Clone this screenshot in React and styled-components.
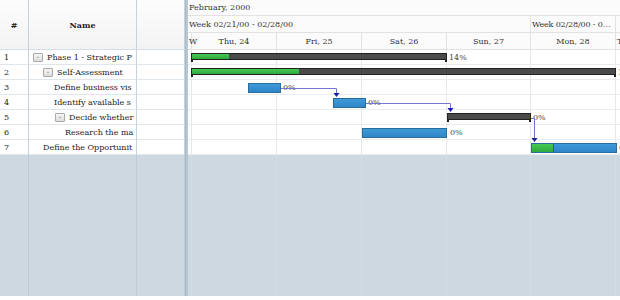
import React from "react";
import styled, { createGlobalStyle } from "styled-components";

const Global = createGlobalStyle`
  html, body { margin: 0; padding: 0; background: #fff; }
  body { font-family: "DejaVu Serif", serif; font-size: 8px; color: #222; }
  * { box-sizing: border-box; }
`;

const ROW_H = 15;
const HEADER_H = 50;
const TOTAL_H = 296;

const Wrap = styled.div`
  display: flex;
  width: 620px;
  height: ${TOTAL_H}px;
  overflow: hidden;
  background: #cdd8e1;
`;

const Left = styled.div`
  display: grid;
  grid-template-columns: 29px 108px 48px;
  grid-template-rows: ${HEADER_H}px repeat(7, ${ROW_H}px) 1fr;
  width: 185px;
  flex: none;
`;

const HeadCell = styled.div`
  display: flex;
  align-items: center;
  justify-content: center;
  font-weight: bold;
  background: linear-gradient(#fdfdfd, #f3f3f3);
  border-right: 1px solid #c3d3df;
  border-bottom: 1px solid #d4dde5;
  color: #222;
`;

const Cell = styled.div`
  display: flex;
  align-items: center;
  background: #fff;
  border-right: 1px solid #c3d3df;
  border-bottom: 1px solid #dfe6ec;
  overflow: hidden;
  white-space: nowrap;
  padding-left: ${(p) => p.$pad || 0}px;
  color: #222;
`;

const NameCell = styled(Cell)`
  padding-right: 4px;
`;

const Filler = styled.div`
  background: #cdd8e1;
  border-right: 1px solid #bccbd7;
`;

const Toggle = styled.span`
  display: inline-flex;
  align-items: center;
  justify-content: center;
  width: 10px;
  height: 9px;
  margin-right: 4px;
  border: 1px solid #a9a9a9;
  border-radius: 1px;
  background: linear-gradient(#f6f6f6, #dcdcdc);
  font-size: 7px;
  line-height: 1;
  color: #555;
  flex: none;
`;

const Splitter = styled.div`
  width: 3px;
  flex: none;
  background: #b9c7d2;
  border-left: 1px solid #a9b9c6;
`;

const Gantt = styled.div`
  position: relative;
  flex: 1;
  display: flex;
  flex-direction: column;
  overflow: hidden;
`;

const HeadRow = styled.div`
  display: flex;
  height: ${(p) => p.$h}px;
  flex: none;
  background: #fbfbfb;
  border-bottom: 1px solid #e2e2e2;
`;

const HeadCellG = styled.div`
  flex: none;
  width: ${(p) => p.$w}px;
  display: flex;
  align-items: center;
  justify-content: ${(p) => (p.$center ? "center" : "flex-start")};
  padding-left: ${(p) => (p.$center ? 0 : 1)}px;
  border-right: ${(p) => (p.$noBorder ? "none" : "1px solid #e2e2e2")};
  white-space: nowrap;
  overflow: ${(p) => (p.$clip ? "hidden" : "visible")};
  color: #333;
`;

const HeadLabel = styled.span`
  display: block;
  min-width: 0;
  overflow: hidden;
  text-overflow: ellipsis;
  white-space: nowrap;
  letter-spacing: -0.15px;
`;

const Body = styled.div`
  position: relative;
  flex: 1;
  display: flex;
  flex-direction: column;
`;

const GRow = styled.div`
  position: relative;
  display: flex;
  height: ${ROW_H}px;
  flex: none;
  background: #fff;
  border-bottom: 1px solid #e9edf0;
`;

const GFill = styled.div`
  flex: 1;
  display: flex;
  background: #cdd8e1;
`;

const DayCell = styled.div`
  flex: none;
  width: ${(p) => p.$w}px;
  border-right: 1px solid ${(p) => (p.$grey ? "#d3dce3" : "#e6e9ec")};
`;

const TaskBar = styled.div`
  position: absolute;
  top: 3px;
  height: 10px;
  border: 1px solid #2a6c9c;
  background: linear-gradient(#3d9ad8, #2f86c6);
  overflow: hidden;
`;

const Progress = styled.div`
  height: 100%;
  background: linear-gradient(#45c955, #2fa93d);
  border-right: 1px solid #1f7a2a;
`;

const SummaryBar = styled.div`
  position: absolute;
  top: 3px;
  height: 7px;
  border: 1px solid #222;
  background: #4a4a4a;
  &::before, &::after {
    content: "";
    position: absolute;
    bottom: -3px;
    width: 2px;
    height: 3px;
    background: #222;
  }
  &::before { left: -1px; }
  &::after { right: -1px; }
`;

const SummaryProgress = styled.div`
  height: 100%;
  background: linear-gradient(#45c955, #2fa93d);
`;

const Pct = styled.span`
  position: absolute;
  top: 0;
  height: ${ROW_H}px;
  display: flex;
  align-items: center;
  color: #444;
  white-space: nowrap;
`;

const Arrows = styled.svg`
  position: absolute;
  left: 0;
  top: 0;
  pointer-events: none;
`;

const days = [
  { w: 4, label: "W" },
  { w: 85, label: "Thu, 24", c: true },
  { w: 85, label: "Fri, 25", c: true },
  { w: 85, label: "Sat, 26", c: true },
  { w: 84, label: "Sun, 27", c: true },
  { w: 85, label: "Mon, 28", c: true },
  { w: 40, label: "T" },
];

const rows = [
  { n: 1, name: "Phase 1 - Strategic P", pad: 4, toggle: true, bar: { type: "s", x: 3, w: 256, p: 37 }, pct: { x: 261, t: "14%" } },
  { n: 2, name: "Self-Assessment", pad: 14, toggle: true, bar: { type: "s", x: 3, w: 425, p: 107 }, pct: { x: 430, t: "14%" } },
  { n: 3, name: "Define business vis", pad: 25, bar: { type: "t", x: 60, w: 33, p: 0 }, pct: { x: 95, t: "0%" } },
  { n: 4, name: "Identify available s", pad: 25, bar: { type: "t", x: 145, w: 33, p: 0 }, pct: { x: 180, t: "0%" } },
  { n: 5, name: "Decide whether", pad: 26, toggle: true, bar: { type: "s", x: 259, w: 84, p: 0 }, pct: { x: 345, t: "0%" } },
  { n: 6, name: "Research the ma", pad: 36, bar: { type: "t", x: 174, w: 85, p: 0 }, pct: { x: 262, t: "0%" } },
  { n: 7, name: "Define the Opportunit", pad: 14, bar: { type: "t", x: 343, w: 86, p: 22 }, pct: { x: 431, t: "0%" } },
];

function Bar({ bar }) {
  if (bar.type === "s") {
    return (
      <SummaryBar style={{ left: bar.x, width: bar.w }}>
        <SummaryProgress style={{ width: bar.p }} />
      </SummaryBar>
    );
  }
  return (
    <TaskBar style={{ left: bar.x, width: bar.w }}>
      {bar.p > 0 && <Progress style={{ width: bar.p }} />}
    </TaskBar>
  );
}

function Arrow({ d, tipX, tipY }) {
  return (
    <g>
      <path d={d} fill="none" stroke="#7474d2" strokeWidth="1" />
      <path d={`M${tipX - 3} ${tipY - 4} L${tipX + 3} ${tipY - 4} L${tipX} ${tipY} Z`} fill="#1c1ca0" />
    </g>
  );
}

export default function App() {
  return (
    <>
      <Global />
      <Wrap>
        <Left>
          <HeadCell>#</HeadCell>
          <HeadCell>Name</HeadCell>
          <HeadCell />
          {rows.map((r) => (
            <React.Fragment key={r.n}>
              <Cell $pad={4}>{r.n}</Cell>
              <NameCell $pad={r.pad}>
                {r.toggle && <Toggle>-</Toggle>}
                {r.name}
              </NameCell>
              <Cell />
            </React.Fragment>
          ))}
          <Filler />
          <Filler />
          <Filler />
        </Left>
        <Splitter />
        <Gantt>
          <HeadRow $h={16}>
            <HeadCellG $w={432} $noBorder>February, 2000</HeadCellG>
          </HeadRow>
          <HeadRow $h={17}>
            <HeadCellG $w={343}>Week 02/21/00 - 02/28/00</HeadCellG>
            <HeadCellG $w={85} $clip>
              <HeadLabel>Week 02/28/00 - 03/06/00</HeadLabel>
            </HeadCellG>
          </HeadRow>
          <HeadRow $h={17}>
            {days.map((d, i) => (
              <HeadCellG key={i} $w={d.w} $center={d.c}>
                {d.label}
              </HeadCellG>
            ))}
          </HeadRow>
          <Body>
            {rows.map((r) => (
              <GRow key={r.n}>
                {days.map((d, i) => (
                  <DayCell key={i} $w={d.w} />
                ))}
                <Bar bar={r.bar} />
                <Pct style={{ left: r.pct.x }}>{r.pct.t}</Pct>
              </GRow>
            ))}
            <GFill>
              {days.map((d, i) => (
                <DayCell key={i} $w={d.w} $grey />
              ))}
            </GFill>
            <Arrows width="432" height="120">
              <Arrow d="M93 38.5 H148.5 V43" tipX={148.5} tipY={47} />
              <Arrow d="M178 53.5 H262.5 V58" tipX={262.5} tipY={62} />
              <Arrow d="M343 68.5 H346.5 V88" tipX={346.5} tipY={92} />
            </Arrows>
          </Body>
        </Gantt>
      </Wrap>
    </>
  );
}
